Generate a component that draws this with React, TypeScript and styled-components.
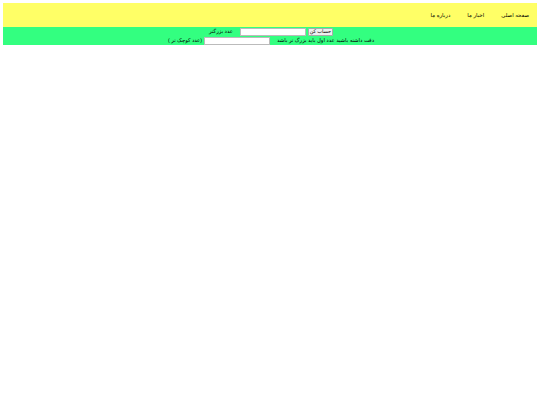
import React from "react";
import styled, { createGlobalStyle } from "styled-components";

const Global = createGlobalStyle`
  html, body { margin: 0; padding: 0; background: #fff; }
  body {
    padding: 3px;
    font-family: "Liberation Sans", Arial, sans-serif;
    font-size: 5.33px;
    color: #000;
    text-rendering: geometricPrecision;
  }
`;

const Page = styled.div`
  direction: rtl;
  width: 534px;
`;

const Header = styled.nav`
  box-sizing: border-box;
  display: flex;
  align-items: center;
  gap: 17px;
  height: 24px;
  padding: 1px 8px 0;
  background: #ffff66;
`;

const NavLink = styled.a`
  color: #000;
  font-size: 5.45px;
  text-decoration: none;
`;

const Form = styled.form`
  box-sizing: border-box;
  display: flex;
  flex-direction: column;
  gap: 1px;
  height: 18px;
  padding-top: 1px;
  background: #33ff80;
`;

const Line = styled.div`
  display: flex;
  justify-content: center;
  align-items: center;
  height: 8px;
  padding-left: 2px;
`;

const Submit = styled.button`
  width: 25px;
  height: 8px;
  margin: 0 0 0 2px;
  padding: 0;
  box-sizing: border-box;
  background: #efefef;
  border: 0.5px solid #aaa;
  border-radius: 1px;
  font: 5px "Liberation Sans", Arial, sans-serif;
  text-rendering: geometricPrecision;
  color: #000;
`;

const NumberInput = styled.input<{ $start: number; $end: number }>`
  width: 66px;
  height: 8px;
  margin: 0 ${(p) => p.$start}px 0 ${(p) => p.$end}px;
  padding: 0;
  box-sizing: border-box;
  background: #fff;
  border: 0.5px solid #bbb;
`;

const Label = styled.span`
  white-space: nowrap;
`;

export default function App() {
  return (
    <>
      <Global />
      <Page>
        <Header>
          <NavLink href="#">صفحه اصلی</NavLink>
          <NavLink href="#">اخبار ما</NavLink>
          <NavLink href="#">درباره ما</NavLink>
        </Header>
        <Form onSubmit={(e) => e.preventDefault()}>
          <Line>
            <Submit type="button">حساب کن</Submit>
            <NumberInput type="text" $start={0} $end={7} />
            <Label>عدد بزرگتر</Label>
          </Line>
          <Line>
            <Label>دقت داشته باشید عدد اول باید بزرگ تر باشد</Label>
            <NumberInput type="text" $start={7} $end={2} />
            <Label>(عدد کوچک تر )</Label>
          </Line>
        </Form>
      </Page>
    </>
  );
}
